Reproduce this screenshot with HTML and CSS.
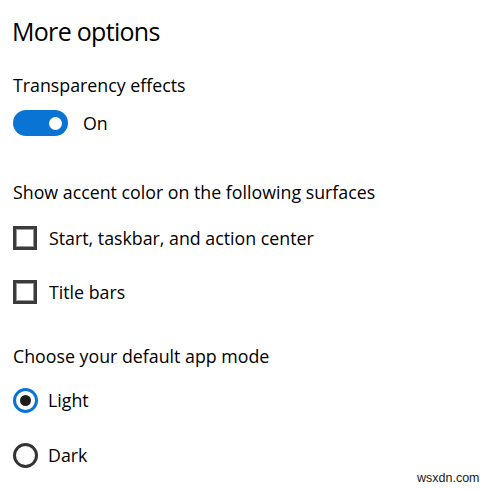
FILE: index.html
```html
<!DOCTYPE html>
<html lang="en">
<head>
<meta charset="utf-8">
<title>More options</title>
<link rel="stylesheet" href="styles.css">
</head>
<body>
<main class="page">
  <h1 class="title">More options</h1>

  <section class="group group-transparency">
    <div class="label">Transparency effects</div>
    <div class="row toggle-row">
      <span class="toggle"><span class="knob"></span></span>
      <span class="row-text">On</span>
    </div>
  </section>

  <section class="group group-accent">
    <div class="label">Show accent color on the following surfaces</div>
    <div class="row check-row">
      <span class="checkbox"></span>
      <span class="row-text">Start, taskbar, and action center</span>
    </div>
    <div class="row check-row">
      <span class="checkbox"></span>
      <span class="row-text">Title bars</span>
    </div>
  </section>

  <section class="group group-mode">
    <div class="label">Choose your default app mode</div>
    <div class="row radio-row">
      <span class="radio checked"><span class="dot"></span></span>
      <span class="row-text">Light</span>
    </div>
    <div class="row radio-row">
      <span class="radio"></span>
      <span class="row-text">Dark</span>
    </div>
  </section>
</main>
<div class="watermark">wsxdn.com</div>
</body>
</html>
```
FILE: styles.css
```css
html, body {
  margin: 0;
  padding: 0;
  background: #ffffff;
}
body {
  width: 490px;
  height: 489px;
  position: relative;
  overflow: hidden;
  font-family: "Open Sans", "Noto Sans", sans-serif;
  color: #000000;
}
.page {
  display: flex;
  flex-direction: column;
  padding: 15px 0 0 13px;
}
.title {
  margin: 0 0 0 -1px;
  font-size: 25px;
  font-weight: 400;
  line-height: 32px;
  letter-spacing: -0.7px;
}
.group {
  display: flex;
  flex-direction: column;
}
.label {
  font-size: 17.8px;
  line-height: 24px;
  white-space: nowrap;
}
.row {
  display: flex;
  align-items: center;
}
.row-text {
  font-size: 17.8px;
  line-height: 24px;
  white-space: nowrap;
}

/* Transparency */
.group-transparency {
  margin-top: 26px;
}
.toggle-row {
  margin-top: 13px;
  gap: 15px;
}
.toggle {
  width: 55px;
  height: 26px;
  border-radius: 13px;
  background: #0a74d4;
  display: flex;
  align-items: center;
  justify-content: flex-end;
  padding-right: 6px;
  box-sizing: border-box;
}
.knob {
  width: 13px;
  height: 13px;
  border-radius: 50%;
  background: #ffffff;
}

/* Accent checkboxes */
.group-accent {
  margin-top: 44px;
}
.check-row {
  gap: 12px;
  margin-top: 22px;
}
.check-row + .check-row {
  margin-top: 30px;
}
.checkbox {
  width: 24px;
  height: 24px;
  box-sizing: border-box;
  border: 3px solid #3b3b3b;
  box-shadow: inset 0 0 0 1px #9a9a9a;
  flex: none;
}

/* App mode radios */
.group-mode {
  margin-top: 40px;
}
.radio-row {
  gap: 10px;
  margin-top: 20px;
}
.radio-row + .radio-row {
  margin-top: 30px;
}
.radio-row .row-text {
  margin-top: -2px;
}
.radio {
  width: 25px;
  height: 25px;
  box-sizing: border-box;
  border-radius: 50%;
  border: 3px solid #333333;
  display: flex;
  align-items: center;
  justify-content: center;
  flex: none;
}
.radio.checked {
  border-color: #0a74d4;
}
.dot {
  width: 11px;
  height: 11px;
  border-radius: 50%;
  background: #1e1e1e;
}

.watermark {
  position: absolute;
  left: 417px;
  top: 471px;
  font-family: "Liberation Sans", Arial, sans-serif;
  font-size: 12.5px;
  line-height: 14px;
  color: #1a1a1a;
}
```
